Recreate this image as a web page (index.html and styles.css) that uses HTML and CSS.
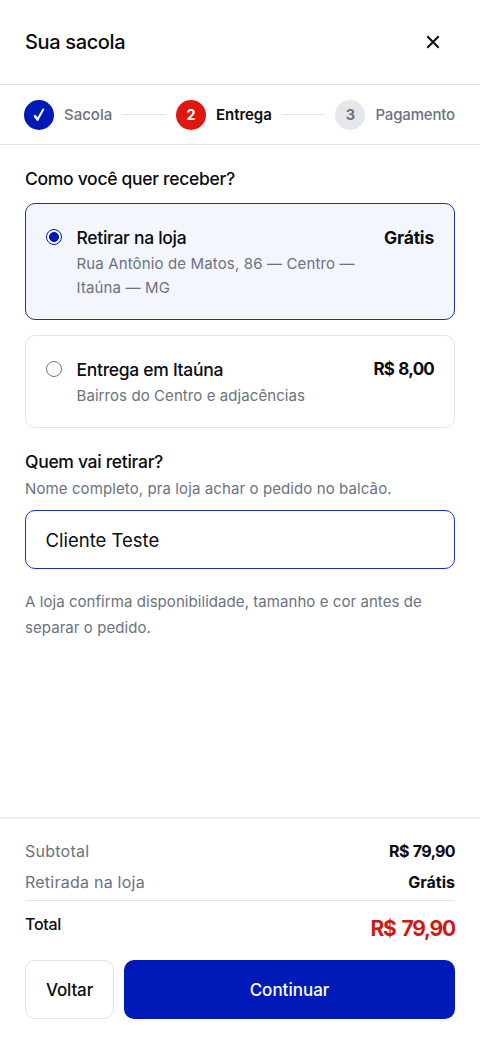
FILE: index.html
```html
<!DOCTYPE html>
<html lang="pt-BR">
<head>
<meta charset="utf-8">
<meta name="viewport" content="width=device-width, initial-scale=1">
<title>Sua sacola</title>
<link rel="stylesheet" href="styles.css">
</head>
<body>
<div class="drawer">
  <header class="header">
    <h1 class="title">Sua sacola</h1>
    <button class="close" aria-label="Fechar">
      <svg width="14" height="14" viewBox="0 0 14 14" fill="none" stroke="currentColor" stroke-width="2" stroke-linecap="butt"><path d="M1.3 1.3l11.4 11.4M12.7 1.3L1.3 12.7"/></svg>
    </button>
  </header>
  <nav class="steps">
    <div class="step">
      <span class="dot dot-done"><svg width="14" height="16" viewBox="0 0 14 16" fill="none" stroke="currentColor" stroke-linecap="round" stroke-linejoin="round"><path stroke-width="2.6" d="M3 9.2l2.6 3.2"/><path stroke-width="2" d="M5.6 12.6L11.2 2.6"/></svg></span>
      <span class="step-label">Sacola</span>
    </div>
    <span class="line"></span>
    <div class="step">
      <span class="dot dot-current">2</span>
      <span class="step-label step-active">Entrega</span>
    </div>
    <span class="line"></span>
    <div class="step">
      <span class="dot">3</span>
      <span class="step-label step-last">Pagamento</span>
    </div>
  </nav>
  <main class="content">
    <h2 class="question">Como você quer receber?</h2>
    <div class="options">
      <div class="option option-on">
        <span class="radio radio-on"></span>
        <div class="option-text">
          <div class="option-name">Retirar na loja</div>
          <div class="option-desc">Rua Antônio de Matos, 86 — Centro —<br>Itaúna — MG</div>
        </div>
        <span class="price">Grátis</span>
      </div>
      <div class="option option-off">
        <span class="radio"></span>
        <div class="option-text">
          <div class="option-name">Entrega em Itaúna</div>
          <div class="option-desc option-desc-single">Bairros do Centro e adjacências</div>
        </div>
        <span class="price amount">R$ 8,00</span>
      </div>
    </div>
    <h2 class="question">Quem vai retirar?</h2>
    <p class="help">Nome completo, pra loja achar o pedido no balcão.</p>
    <div class="field">Cliente Teste</div>
    <p class="note">A loja confirma disponibilidade, tamanho e cor antes de<br>separar o pedido.</p>
  </main>
  <footer class="footer">
    <div class="row"><span class="row-label">Subtotal</span><span class="row-value row-amount">R$ 79,90</span></div>
    <div class="row"><span class="row-label">Retirada na loja</span><span class="row-value">Grátis</span></div>
    <div class="total"><span class="total-label">Total</span><span class="total-value">R$ 79,90</span></div>
    <div class="actions">
      <button class="btn btn-back">Voltar</button>
      <button class="btn btn-next">Continuar</button>
    </div>
  </footer>
</div>
</body>
</html>
```
FILE: styles.css
```css
* { box-sizing: border-box; }
body { margin: 0; background: #fff; color: #0b0c0f; font-family: Inter, "Liberation Sans", sans-serif; }
h1, h2, p { margin: 0; font-weight: 500; }
button { font: inherit; color: inherit; padding: 0; border: 0; background: none; }
.drawer { height: 1039px; display: flex; flex-direction: column; overflow: hidden; }
.header { height: 85px; display: flex; align-items: center; justify-content: space-between; padding: 0 25px; border-bottom: 1px solid #dfe0e3; }
.title { font-size: 20px; line-height: 28px; letter-spacing: -0.35px; }
.close { width: 44px; height: 44px; display: grid; place-items: center; }
.steps { height: 60px; display: flex; align-items: center; gap: 10px; padding: 0 25px 0 24px; border-bottom: 1px solid #e1e2e4; }
.step { display: flex; align-items: center; gap: 10px; }
.dot { width: 30px; height: 30px; border-radius: 50%; display: grid; place-items: center; background: #e5e7eb; color: #6b7280; font-size: 14.5px; font-weight: 700; }
.dot-done { background: #001ab8; color: #fff; }
.dot-current { background: #de180e; color: #fff; }
.step-label { font-size: 15px; font-weight: 500; color: #6b7280; white-space: nowrap; }
.step-active { color: #0b0c0f; font-weight: 600; letter-spacing: -0.05px; }
.step-last { letter-spacing: -0.17px; }
.line { flex: 1; height: 1px; background: #e1e3e6; }
.content { flex: 1; padding: 21px 25px 0; }
.question { font-size: 17.5px; line-height: 26px; letter-spacing: -0.3px; white-space: nowrap; }
.options { display: flex; flex-direction: column; gap: 15px; margin: 11px 0 21px; }
.option { display: flex; align-items: flex-start; border: 1px solid #e3e4e7; border-radius: 10px; padding: 20px 20px 20px 19.5px; }
.option-on { height: 117px; border-color: #1c2fb5; background: #f4f6fe; }
.option-off { height: 93px; }
.radio { width: 16px; height: 16px; flex: none; margin: 5px 15px 0 0; border: 1px solid #767676; border-radius: 50%; background: #fff; }
.radio-on { border-color: #001ab8; background: radial-gradient(circle, #001ab8 0 4.6px, #fff 5.3px); }
.option-text { flex: 1; white-space: nowrap; }
.option-name { font-size: 17.5px; font-weight: 500; line-height: 27px; letter-spacing: -0.3px; }
.option-desc { font-size: 15px; line-height: 24.4px; letter-spacing: 0.14px; color: #6b7280; padding-top: 0.5px; }
.option-desc-single { line-height: 26px; letter-spacing: 0.08px; padding-top: 0; }
.price { font-size: 17.5px; font-weight: 700; line-height: 27px; letter-spacing: -0.2px; }
.amount { font-size: 17px; letter-spacing: -0.8px; word-spacing: 1px; }
.help { font-size: 15px; font-weight: 400; line-height: 26px; letter-spacing: 0.1px; color: #6b7280; padding-top: 1px; }
.field { height: 59px; margin-top: 8px; display: flex; align-items: center; padding: 0 20px 0 19.5px; border: 1px solid #1c2fb5; border-radius: 10px; font-size: 18.5px; }
.note { margin-top: 20px; font-size: 15px; font-weight: 400; line-height: 26px; letter-spacing: 0.06px; color: #6b7280; white-space: nowrap; }
.footer { height: 222px; padding: 16px 25px 0; border-top: 2px solid #eeeff0; }
.row { height: 31px; display: flex; align-items: center; justify-content: space-between; font-size: 16px; }
.row-label { letter-spacing: 0.24px; color: #6b7280; }
.row-value { font-weight: 700; }
.row-amount { letter-spacing: -0.65px; word-spacing: 1px; }
.total { height: 43px; display: flex; justify-content: space-between; border-top: 1px solid #e1e3e6; margin-top: 3px; padding-top: 11px; }
.total-label { font-size: 16px; font-weight: 500; line-height: 24px; letter-spacing: -0.3px; }
.total-value { font-size: 21px; font-weight: 700; line-height: 33px; letter-spacing: -1.2px; word-spacing: 2px; color: #cf1a12; }
.actions { display: flex; gap: 10px; margin-top: 17px; }
.btn { height: 59px; border-radius: 10px; font-size: 17px; font-weight: 500; }
.btn-back { width: 89px; border: 1px solid #e3e4e7; letter-spacing: -0.15px; }
.btn-next { flex: 1; background: #001ab8; color: #fff; }
```
